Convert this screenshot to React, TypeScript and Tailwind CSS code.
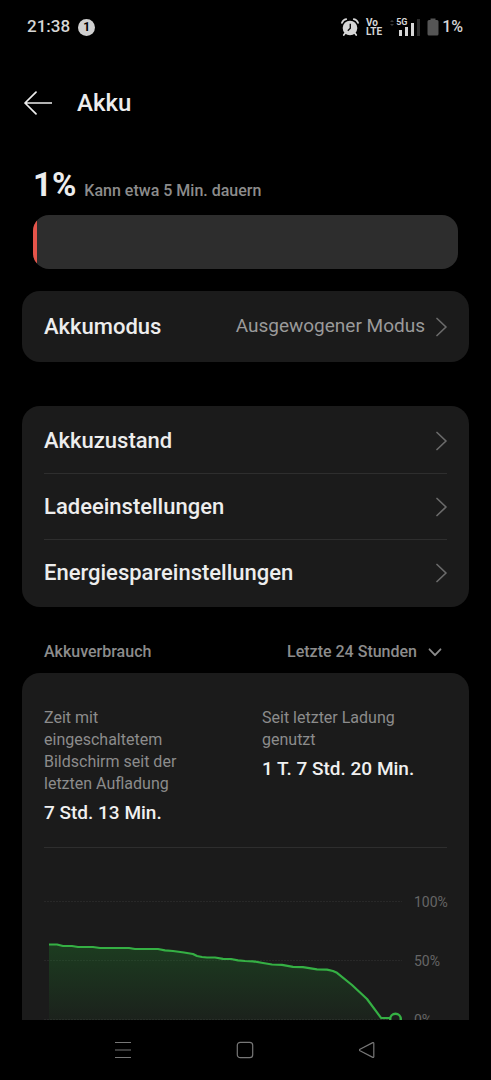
import { useState } from "react";

const settings = ["Akkuzustand", "Ladeeinstellungen", "Energiespareinstellungen"];

const batteryLevel = 1;

const chartLine =
  "5,52.5 13,52.5 19,54 28,54 34,55 49,55 56,56 85,56 91,57 114,57 121,58.3 129,59 140,60.5 149,62 153,64 158,65 163,65.5 171,65.5 179,66.8 187,67 194,68.3 201,69 209,69.3 219,71 228,72.5 238,72.8 249,74.8 259,75.2 273,77.3 283,77.6 289,79 293,80.8 308,93 323,107 337,125.8 346,126";

function Chevron() {
  return (
    <svg
      viewBox="0 0 12 20"
      className="h-5 w-3 shrink-0"
      fill="none"
      stroke="#6a6a6a"
      strokeWidth="1.7"
      strokeLinecap="round"
      strokeLinejoin="round"
    >
      <path d="M2 1.500 11 10l-9 8.500" />
    </svg>
  );
}

function StatusBar() {
  return (
    <header className="flex h-[54px] items-center justify-between pr-7 pl-[27px] text-[17px] font-medium text-[#d6d6d6]">
      <div className="flex items-center gap-2">
        <span>21:38</span>
        <span className="flex size-[17px] items-center justify-center rounded-full bg-[#d0d0d0] text-xs font-bold text-black">
          1
        </span>
      </div>
      <div className="flex items-center">
        <svg viewBox="0 0 18 18" className="size-[18px]" fill="none">
          <circle cx="9" cy="10" r="7.300" fill="#d6d6d6" />
          <path d="M1 4.800C1.600 2.900 3.200 1.500 5.200 1.100M17 4.800C16.400 2.900 14.800 1.500 12.800 1.100" stroke="#d6d6d6" strokeWidth="1.800" strokeLinecap="round" />
          <path d="M4 15.300 2.800 17M14 15.300 15.200 17" stroke="#d6d6d6" strokeWidth="1.800" strokeLinecap="round" />
          <path d="M9.300 5.800v4.500L6.800 12.800" stroke="#111" strokeWidth="1.400" />
        </svg>
        <div className="ml-[7px] text-[10px] leading-[9px] font-bold">
          <div>Vo</div>
          <div>LTE</div>
        </div>
        <div className="relative ml-2">
          <svg viewBox="0 0 30 18" className="h-[18px] w-[30px]">
            <path d="M0 4 2 2 4 4zM0 6 2 8 4 6z" fill="#3a3a3a" />
            <path d="M9 12h3v6H9zM15 9h3v9h-3zM21 5h3v13h-3z" fill="#d6d6d6" />
            <path d="M27 1h3v17h-3z" fill="#2b2b2b" />
          </svg>
          <span className="absolute top-0 left-1.5 text-[9px] leading-[9px] font-bold">5G</span>
        </div>
        <svg viewBox="0 0 12 18" className="ml-[7px] h-[18px] w-3">
          <path d="M3.500 0.500h5V2H10a1.500 1.500 0 0 1 1.500 1.500V16a1.500 1.500 0 0 1-1.500 1.500H2A1.500 1.500 0 0 1 .5 16V3.500A1.500 1.500 0 0 1 2 2h1.500z" fill="#555" />
        </svg>
        <span className="ml-[3px] text-base">1%</span>
      </div>
    </header>
  );
}

function Stat({ label, value }: { label: string; value: string }) {
  return (
    <div>
      <dt className="max-w-[150px] text-base leading-[22px] text-[#8c8c8c]">{label}</dt>
      <dd className="mt-1 text-[19px] leading-7 font-medium whitespace-nowrap text-[#f0f0f0]">{value}</dd>
    </div>
  );
}

function BatteryChart() {
  return (
    <div className="mt-11 flex items-start">
      <svg viewBox="0 0 358 140" className="min-w-0 flex-1" fill="none">
        <defs>
          <linearGradient id="fill" x1="0" y1="52" x2="0" y2="128" gradientUnits="userSpaceOnUse">
            <stop offset="0" stopColor="#1f8a2c" stopOpacity="0.3" />
            <stop offset="1" stopColor="#1f8a2c" stopOpacity="0.06" />
          </linearGradient>
        </defs>
        <path d="M0 9.500H358M0 68.500H358M0 127.500H358" stroke="#282828" strokeDasharray="2 1" />
        <polygon points={`${chartLine} 346,128 5,128`} fill="url(#fill)" />
        <polyline points={chartLine} stroke="#35b044" strokeWidth="2.2" strokeLinejoin="round" />
        <circle cx="351.500" cy="127" r="5.300" fill="#1b1b1b" stroke="#35b044" strokeWidth="2.400" />
      </svg>
      <div className="ml-3 flex h-[138px] w-[33px] flex-col justify-between text-sm leading-5 text-[#666]">
        <span>100%</span>
        <span>50%</span>
        <span>0%</span>
      </div>
    </div>
  );
}

export default function App() {
  const [range, setRange] = useState("24h");

  return (
    <div className="flex h-screen flex-col bg-black font-[Roboto,sans-serif] text-[#ededed]">
      <StatusBar />

      <main className="min-h-0 flex-1 overflow-y-auto [scrollbar-width:none]">
        <div className="flex h-[98px] items-center gap-[25px] px-6">
          <button type="button" aria-label="Zurück">
            <svg viewBox="0 0 28 24" className="h-6 w-7" fill="none" stroke="#ededed" strokeWidth="1.700" strokeLinecap="round" strokeLinejoin="round">
              <path d="M12 1.200 1 12l11 10.800M1 12h26.500" />
            </svg>
          </button>
          <h1 className="text-2xl font-medium">Akku</h1>
        </div>

        <div className="flex items-baseline gap-2 px-[33px] pt-[13px]">
          <span className="text-[33px] leading-10 font-bold">{batteryLevel}%</span>
          <span className="text-base font-medium text-[#8c8c8c]">Kann etwa 5 Min. dauern</span>
        </div>
        <div className="mx-[33px] mt-2.5 h-[54px] overflow-hidden rounded-2xl bg-[#2d2d2d]">
          <div className="h-full bg-[#e5544a]" style={{ width: `${batteryLevel}%` }} />
        </div>

        <button
          type="button"
          className="mx-[22px] mt-[22px] flex h-[71px] w-[calc(100%-44px)] items-center rounded-[18px] bg-[#1b1b1b] px-[22px]"
        >
          <span className="text-[22px] font-medium">Akkumodus</span>
          <span className="mr-2.5 ml-auto text-[19px] text-[#9a9a9a]">Ausgewogener Modus</span>
          <Chevron />
        </button>

        <div className="mx-[22px] mt-11 divide-y divide-[#2e2e2e] rounded-[18px] bg-[#1b1b1b] px-[22px] py-0.5">
          {settings.map((label) => (
            <button key={label} type="button" className="box-content flex h-[65px] w-full items-center justify-between">
              <span className="text-[22px] font-medium">{label}</span>
              <Chevron />
            </button>
          ))}
        </div>

        <div className="mx-11 mt-[34px] flex h-[22px] items-center justify-between text-base font-medium text-[#8c8c8c]">
          <h2>Akkuverbrauch</h2>
          <div className="flex items-center gap-[11px] pr-[5px]">
            <select
              aria-label="Zeitraum"
              value={range}
              onChange={(e) => setRange(e.target.value)}
              className="appearance-none bg-transparent text-right outline-none"
            >
              <option value="24h">Letzte 24 Stunden</option>
            </select>
            <svg viewBox="0 0 14 9" className="h-[9px] w-3.5" fill="none" stroke="#8c8c8c" strokeWidth="1.800" strokeLinecap="round" strokeLinejoin="round">
              <path d="M1.500 1.300 7 7.200l5.500-5.900" />
            </svg>
          </div>
        </div>

        <section className="mx-[22px] mt-2.5 rounded-t-[18px] bg-[#1b1b1b] px-[22px] pt-[34px] pb-10">
          <dl className="grid grid-cols-[218fr_185fr] border-b border-[#2e2e2e] pb-5">
            <Stat label="Zeit mit eingeschaltetem Bildschirm seit der letzten Aufladung" value="7 Std. 13 Min." />
            <Stat label="Seit letzter Ladung genutzt" value="1 T. 7 Std. 20 Min." />
          </dl>
          <BatteryChart />
        </section>
      </main>

      <nav className="grid h-[60px] shrink-0 grid-cols-3 px-[62px]">
        <button type="button" aria-label="Letzte Apps" className="flex items-center justify-center">
          <svg viewBox="0 0 18 18" className="size-[18px]" stroke="#777" strokeWidth="1.200">
            <path d="M1 1.500h16M1 9h16M1 16.500h16" />
          </svg>
        </button>
        <button type="button" aria-label="Startbildschirm" className="flex items-center justify-center">
          <svg viewBox="0 0 18 18" className="size-[18px]" fill="none" stroke="#777" strokeWidth="1.200">
            <rect x="1.300" y="1.300" width="15.400" height="15.400" rx="3" />
          </svg>
        </button>
        <button type="button" aria-label="Zurück" className="flex items-center justify-center">
          <svg viewBox="0 0 18 18" className="size-[18px]" fill="none" stroke="#777" strokeWidth="1.200" strokeLinejoin="round">
            <path d="M13.800 1.600 1 8.200q-1 .8 0 1.600l12.800 6.600q1 .3 1-.8V2.400q0-1.100-1-.8z" />
          </svg>
        </button>
      </nav>
    </div>
  );
}
